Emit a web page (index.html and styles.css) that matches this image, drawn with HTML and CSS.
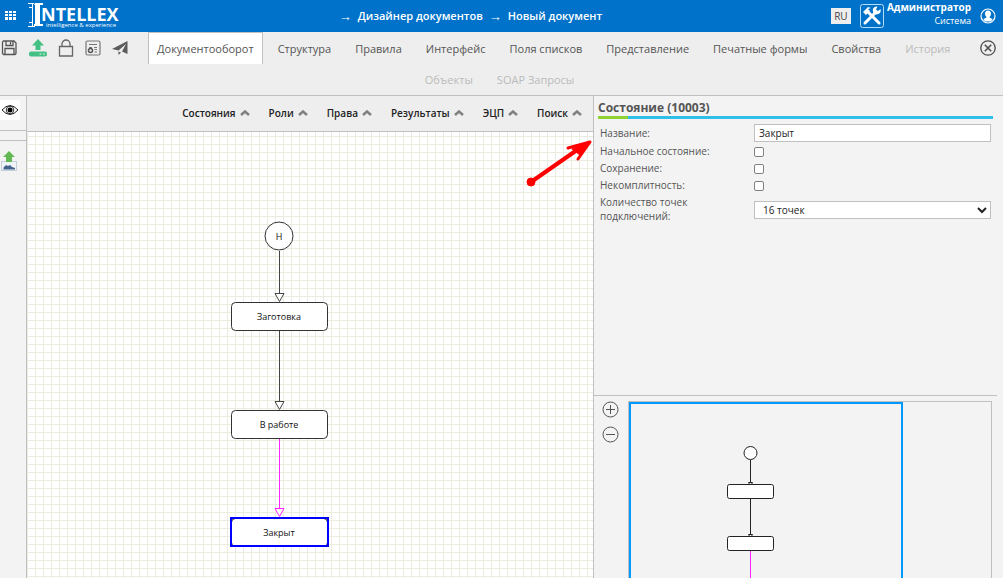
FILE: index.html
```html
<!DOCTYPE html>
<html lang="ru">
<head>
<meta charset="utf-8">
<title>Intellex — Дизайнер документов</title>
<link rel="stylesheet" href="styles.css">
</head>
<body>
<div class="app">
  <header class="header">
    <button class="icon-btn apps" aria-label="Приложения">
      <svg width="12" height="10" viewBox="0 0 12 10" fill="#fff"><path d="M0 0h3v2H0zM4 0h3v2H4zM8 0h3v2H8zM0 3h3v2H0zM4 3h3v2H4zM8 3h3v2H8zM0 6h3v3H0zM4 6h3v3H4zM8 6h3v3H8z"/></svg>
    </button>
    <svg class="logo" width="96" height="32" viewBox="0 0 96 32" role="img" aria-label="Intellex">
      <path fill="#fff" d="M7 3h8v2h-3v19h3v2H6v-2h1V5H6z"/>
      <path fill="none" stroke="#fff" d="M0 3.500H6M4.500 4v3.500H1M4.500 7.500v15M1 22.500h3.500V26M0 26.500H7"/>
      <text class="logo-name" x="13" y="21">NTELLEX</text>
      <text class="logo-sub" x="18" y="27">intelligence &amp; experience</text>
    </svg>
    <nav class="crumbs">
      <span class="arrow">→</span><a href="#">Дизайнер документов</a>
      <span class="arrow">→</span><a href="#">Новый документ</a>
    </nav>
    <button class="lang">RU</button>
    <svg class="tools" width="24" height="24" viewBox="0 0 24 24" fill="none" stroke="#fff">
      <rect x=".5" y=".5" width="23" height="23" rx="2" stroke="#b9dcf6"/>
      <path d="M7 7l12 12" stroke-width="3" stroke-linecap="round"/>
      <path d="M5 19L16 8" stroke-width="3" stroke-linecap="round"/>
      <path d="M3 8l5-5 3 1-3 1 2 2-4 4z" fill="#fff" stroke="none"/>
      <path d="M20.500 5a4 4 0 1 1-3-2.500L16 5.500l2 1.500z" fill="#fff" stroke="none"/>
    </svg>
    <div class="user"><strong>Администратор</strong><span>Система</span></div>
    <button class="icon-btn" aria-label="Профиль">
      <svg width="16" height="16" viewBox="0 0 16 16"><circle cx="8" cy="8" r="7" fill="none" stroke="#fff" stroke-width="1.200"/><path fill="#fff" d="M8 2.500c2 0 3 1.300 3 3.200 0 1.500-.7 2.300-1.300 3v1l3 1.300L11 13.500H5L3.300 11l3-1.300v-1C5.700 8 5 7.200 5 5.700 5 3.800 6 2.500 8 2.500z"/></svg>
    </button>
  </header>

  <div class="toolbar">
    <div class="toolbar-row">
      <div class="actions">
        <button class="icon-btn" aria-label="Сохранить">
          <svg width="17" height="18" viewBox="0 0 17 18" fill="none" stroke="#555" stroke-width="1.300"><path d="M2.500 2h10.500l2 2v10.500l-1 1H2.500l-1-1V3z"/><path d="M5 2v4.500h7V2M9.500 3v2.500M4 15.500V9.500h9v6"/></svg>
        </button>
        <button class="icon-btn" aria-label="Загрузить">
          <svg width="18" height="18" viewBox="0 0 18 18" fill="#43c083"><path d="M9 0l6 6.500h-3.500V11h-5V6.500H3z"/><rect x="0" y="12.500" width="18" height="5" rx="2"/><path fill="#d9f3e6" d="M10.500 14.500h2v1h-2zM14 14.500h2v1h-2z"/></svg>
        </button>
        <button class="icon-btn" aria-label="Заблокировать">
          <svg width="16" height="18" viewBox="0 0 16 18" fill="none" stroke="#666" stroke-width="1.300"><path d="M1.500 7.500h13v9.500h-13zM4 7.500V5a4 4 0 0 1 8 0v2.500"/></svg>
        </button>
        <button class="icon-btn" aria-label="Сертификат">
          <svg width="16" height="16" viewBox="0 0 16 16" fill="none" stroke="#777" stroke-width="1.200"><rect x="1" y="1" width="14" height="14" rx="1.500"/><path d="M4 4.500h8M4 7.500h3M9 7.500h3M9.500 9.500H12M9.500 12H12"/><circle cx="5.500" cy="10.500" r="2" stroke="#555" stroke-width="1.500"/></svg>
        </button>
        <button class="icon-btn" aria-label="Отправить">
          <svg width="16" height="16" viewBox="0 0 16 16" fill="#5b5b5b"><path d="M15.500 1v13l-5.500-2.500L14 4 6.500 10.500 0 9zM6.500 11.500L9 12.500 6.500 15z"/></svg>
        </button>
      </div>
      <nav class="tabs">
        <a class="tab active" href="#">Документооборот</a>
        <a class="tab" href="#">Структура</a>
        <a class="tab" href="#">Правила</a>
        <a class="tab" href="#">Интерфейс</a>
        <a class="tab" href="#">Поля списков</a>
        <a class="tab" href="#">Представление</a>
        <a class="tab" href="#">Печатные формы</a>
        <a class="tab" href="#">Свойства</a>
        <a class="tab muted" href="#">История</a>
      </nav>
      <button class="icon-btn" aria-label="Закрыть">
        <svg width="16" height="16" viewBox="0 0 16 16" fill="none" stroke="#4c4c4c" stroke-width="1.300"><circle cx="8" cy="8" r="7.200"/><path d="M4.800 4.800l6.400 6.400M11.200 4.800l-6.400 6.400" stroke-width="1.600"/></svg>
      </button>
    </div>
    <nav class="tabs second">
      <a class="tab muted" href="#">Объекты</a>
      <a class="tab muted" href="#">SOAP Запросы</a>
    </nav>
  </div>

  <main class="main">
    <aside class="rail">
      <button class="icon-btn eye" aria-label="Показать">
        <svg width="18" height="20" viewBox="0 0 18 20"><path d="M1 10q8-9 16 0-8 9-16 0z" fill="#fff" stroke="#222"/><circle cx="9" cy="10" r="3.800" fill="none" stroke="#333"/><circle cx="9" cy="10" r="2.500"/></svg>
      </button>
      <div class="rail-gap"></div>
      <button class="icon-btn export" aria-label="Экспорт изображения">
        <svg width="16" height="20" viewBox="0 0 16 20"><rect x=".5" y="10.500" width="15" height="9" fill="#edf3f8" stroke="#c3cfda"/><path d="M2.500 18.500v-2l2.500-2.500 2 1 2-1 2 2 3 1v1.500z" fill="#45648d"/><path d="M8 0l6 6h-3v5H5V6H2z" fill="#62b852"/></svg>
      </button>
    </aside>

    <section class="workspace">
      <nav class="menu">
        <button>Состояния<svg class="chev" viewBox="0 0 10 6"><path d="M1 5l4-3.500L9 5"/></svg></button>
        <button>Роли<svg class="chev" viewBox="0 0 10 6"><path d="M1 5l4-3.500L9 5"/></svg></button>
        <button>Права<svg class="chev" viewBox="0 0 10 6"><path d="M1 5l4-3.500L9 5"/></svg></button>
        <button>Результаты<svg class="chev" viewBox="0 0 10 6"><path d="M1 5l4-3.500L9 5"/></svg></button>
        <button>ЭЦП<svg class="chev" viewBox="0 0 10 6"><path d="M1 5l4-3.500L9 5"/></svg></button>
        <button>Поиск<svg class="chev" viewBox="0 0 10 6"><path d="M1 5l4-3.500L9 5"/></svg></button>
      </nav>
      <div class="canvas">
        <svg class="diagram" role="img" aria-label="Схема документооборота">
          <g class="edge">
            <path d="M252.500 119v42M248 161.500h9l-4.500 8z"/>
            <path d="M252.500 199v70M248 269.500h9l-4.500 8z"/>
            <path class="pink" d="M252.500 307v69M248 376.500h9l-4.500 8z"/>
          </g>
          <g class="node">
            <circle cx="252" cy="104" r="14"/>
            <rect x="204.500" y="170.500" width="96" height="28" rx="4"/>
            <rect x="204.500" y="278.500" width="96" height="28" rx="4"/>
            <rect x="204.500" y="386.500" width="96" height="28" rx="4"/>
            <rect class="selected" x="204" y="386" width="97" height="28"/>
          </g>
          <g class="caption">
            <text x="252" y="108">Н</text>
            <text x="252" y="188">Заготовка</text>
            <text x="252" y="296">В работе</text>
            <text x="252" y="404">Закрыт</text>
          </g>
          <g class="pointer">
            <circle cx="504" cy="50" r="4"/>
            <path d="M504 50L550 18" stroke-width="4"/>
            <path d="M563 10L541 16M563 10L551 27" stroke-width="3" stroke-linecap="round"/>
            <path d="M563 10L545 17l8 6z"/>
          </g>
        </svg>
      </div>
    </section>

    <aside class="side">
      <section class="props">
        <h1>Состояние (10003)</h1>
        <div class="rule"></div>
        <form class="form">
          <label for="name">Название:</label><input id="name" type="text" value="Закрыт">
          <label for="start">Начальное состояние:</label><input id="start" type="checkbox">
          <label for="save">Сохранение:</label><input id="save" type="checkbox">
          <label for="inc">Некомплитность:</label><input id="inc" type="checkbox">
          <label for="points">Количество точек подключений:</label>
          <select id="points"><option>16 точек</option></select>
        </form>
      </section>
      <section class="preview">
        <div class="zoom">
          <button class="icon-btn" aria-label="Увеличить"><svg width="17" height="17" viewBox="0 0 17 17"><circle cx="8.500" cy="8.500" r="7.500"/><path d="M4 8.500h9M8.500 4v9"/></svg></button>
          <button class="icon-btn" aria-label="Уменьшить"><svg width="17" height="17" viewBox="0 0 17 17"><circle cx="8.500" cy="8.500" r="7.500"/><path d="M4 8.500h9"/></svg></button>
        </div>
        <div class="map">
          <div class="map-view">
            <svg class="mini">
              <path d="M119.500 56v22M117.500 78.500h4l-2 3.500zM119.500 94v36M117.500 130.500h4l-2 3.500z"/>
              <path class="pink" d="M119.500 146v60"/>
              <circle cx="119.500" cy="49" r="6.500"/>
              <rect x="96.500" y="80.500" width="46" height="14" rx="2"/>
              <rect x="96.500" y="132.500" width="46" height="14" rx="2"/>
            </svg>
          </div>
        </div>
      </section>
    </aside>
  </main>
</div>
</body>
</html>
```
FILE: styles.css
```css
* { box-sizing: border-box; }
body {
  margin: 0;
  font-family: "Open Sans", "Noto Sans", sans-serif;
  color: #555;
  background: #eee;
}
a { color: inherit; text-decoration: none; }
button { font: inherit; color: inherit; border: 0; background: none; padding: 0; }
svg { display: block; flex: none; }
.icon-btn { display: flex; flex: none; }

.app { display: flex; flex-direction: column; height: 100vh; overflow: hidden; }

.header {
  display: flex;
  align-items: center;
  height: 32px;
  padding: 0 7px 0 5px;
  color: #fff;
  background: #0072c9;
}
.logo { margin-left: 11px; fill: #fff; }
.logo-name { font-size: 18px; font-weight: 700; }
.logo-sub { font-size: 6px; }
.crumbs {
  display: flex;
  flex: 1;
  align-items: center;
  justify-content: center;
  gap: 6px;
  padding-right: 14px;
  font-size: 11px;
  font-weight: 600;
  line-height: 26px;
}
.arrow { font-size: 13px; line-height: 26px; }
.lang {
  width: 20px;
  height: 16px;
  color: #444;
  background: #eee;
  font-size: 10px;
  line-height: 14px;
}
.tools { margin: 0 3px 0 9px; }
.user {
  display: flex;
  flex-direction: column;
  margin-right: 9px;
  padding-bottom: 4px;
  font-size: 10px;
  line-height: 13px;
  text-align: right;
}
.user span { font-size: 9px; }

.toolbar { height: 64px; border-bottom: 1px solid #c0c0c0; }
.toolbar-row { display: flex; align-items: center; height: 32px; padding-right: 7px; }
.actions { display: flex; align-items: center; gap: 11px; padding-left: 1px; }
.tabs { display: flex; flex: 1; gap: 6px; padding-left: 20px; }
.tab {
  padding: 0 8px;
  border: 1px solid transparent;
  border-bottom: 0;
  font-size: 11px;
  line-height: 31px;
  white-space: nowrap;
}
.tab.active { background: #fff; border-color: #c0c0c0; }
.tab.muted { color: #bbb; }
.tabs.second { justify-content: center; padding: 0 4px 0 0; }
.second .tab { line-height: 29px; }

.main { display: grid; flex: 1; min-height: 0; grid-template-columns: 27px minmax(0, 1fr) 410px; }

.rail { background: #f3f3f3; border-right: 1px solid #c0c0c0; }
.eye { margin: 4px 0 10px; padding: 0 1px; background: #fff; }
.rail-gap { height: 11px; border: solid #c0c0c0; border-width: 1px 0; }
.export { padding: 10px 1px; }

.workspace { display: flex; flex-direction: column; min-height: 0; }
.menu {
  display: flex;
  justify-content: flex-end;
  gap: 19px;
  height: 36px;
  padding: 0 11px 1px 0;
  border-bottom: 1px solid #c0c0c0;
  color: #222;
  font-size: 10px;
  font-weight: 600;
}
.menu button { display: flex; align-items: center; gap: 4px; }
.chev { width: 10px; height: 6px; fill: none; stroke: #808080; stroke-width: 2.5px; }

.canvas {
  flex: 1;
  min-height: 0;
  background-color: #fff;
  background-image:
    linear-gradient(to right, #e9ecdf 1px, transparent 1px),
    linear-gradient(to bottom, #e9ecdf 1px, transparent 1px);
  background-size: 8px 8px;
  background-position: 0 4px;
}
.diagram { width: 100%; height: 100%; }
.edge { fill: #fff; stroke: #444; }
.edge .pink, .mini .pink { stroke: #f2f; }
.node { fill: #fff; stroke: #333; }
.node .selected { fill: none; stroke: #00f; stroke-width: 2px; }
.caption { fill: #111; font-size: 9px; text-anchor: middle; }
.pointer { fill: #f00; stroke: #f00; }

.side {
  display: grid;
  grid-template-rows: 300px 1fr;
  min-height: 0;
  padding-right: 6px;
  border-left: 1px solid #c0c0c0;
  background: #f3f3f3;
}
.props { padding: 3px 4px 0; border-bottom: 1px solid #c0c0c0; }
h1 { margin: 0; font-size: 12px; line-height: 17px; color: #555; }
.rule { height: 3px; background: linear-gradient(to right, #8fd130 30px, #2fbfe8 30px); }
.form {
  display: grid;
  grid-template-columns: 154px 1fr;
  align-items: center;
  padding: 5px 2px;
  font-size: 10px;
  line-height: 14px;
}
.form label { padding: 1px 0 2px; }
.form input[type="text"], .form select {
  width: 100%;
  height: 18px;
  padding: 0 4px;
  border: 1px solid #c0c0c0;
  border-radius: 0;
  background: #fff;
  color: #222;
  font: inherit;
}
.form input[type="text"] { margin-bottom: 1px; }
.form input[type="checkbox"] {
  appearance: none;
  width: 10px;
  height: 10px;
  margin: 0;
  border: 1px solid #808080;
  border-radius: 2px;
  background: #fff;
}

.preview { display: flex; min-height: 0; padding: 5px 5px 0 8px; overflow: hidden; }
.zoom { display: flex; flex-direction: column; gap: 8px; width: 26px; }
.zoom svg { fill: none; stroke: #555; }
.map { flex: 1; border: 1px solid #c0c0c0; border-bottom: 0; }
.map-view { width: 274px; height: 100%; border: 2px solid #09f; border-bottom: 0; }
.mini { width: 100%; height: 100%; fill: #fff; stroke: #222; }
```
